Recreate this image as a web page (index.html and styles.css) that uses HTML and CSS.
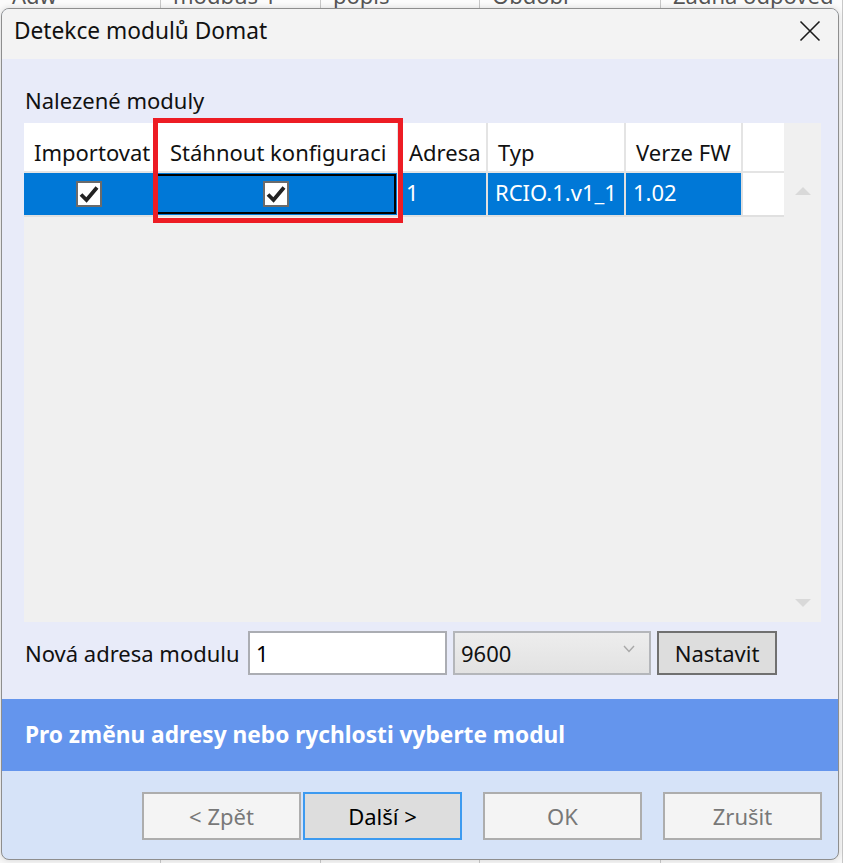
FILE: index.html
```html
<!DOCTYPE html>
<html lang="cs">
<head>
  <meta charset="UTF-8" />
  <title>Detekce modulů Domat</title>
  <link rel="stylesheet" href="styles.css">
</head>

<body>
  <!-- Main app behind the dialog -->
  <div class="app">
    <div class="app-head">
      <div class="app-col"><span>Adw</span></div>
      <div class="app-col"><span>modbus 1</span></div>
      <div class="app-col"><span>popis</span></div>
      <div class="app-col"><span>Obdobi</span></div>
      <div class="app-col"><span>Zadna odpoved</span></div>
    </div>
    <div class="app-body">
      <div class="app-col"></div>
      <div class="app-col"></div>
      <div class="app-col"></div>
      <div class="app-col"></div>
      <div class="app-col"></div>
    </div>
  </div>

  <div class="dialog">
    <div class="title-bar">
      <div class="title">Detekce modulů Domat</div>
      <svg class="close-icon" width="22" height="22" viewBox="0 0 22 22">
        <path d="M1.5 1.5 L20.5 20.5 M20.5 1.5 L1.5 20.5" stroke="#1b1b1b" stroke-width="1.6" fill="none" />
      </svg>
    </div>

    <div class="content">
      <div class="section-label">Nalezené moduly</div>

      <div class="grid-box">
        <div class="grid-table">
          <div class="grid-row header-row">
            <div class="cell">Importovat</div>
            <div class="cell cell-wide">Stáhnout konfiguraci</div>
            <div class="cell">Adresa</div>
            <div class="cell">Typ</div>
            <div class="cell">Verze FW</div>
            <div class="cell"></div>
          </div>
          <div class="grid-row data-row">
            <div class="cell cell-center">
              <span class="checkbox">
                <svg width="22" height="22" viewBox="0 0 22 22"><path d="M3 11.5 L8.5 17 L19 4.5" stroke="#222" stroke-width="3.8" fill="none" /></svg>
              </span>
            </div>
            <div class="cell cell-center cell-focus">
              <span class="checkbox">
                <svg width="22" height="22" viewBox="0 0 22 22"><path d="M3 11.5 L8.5 17 L19 4.5" stroke="#222" stroke-width="3.8" fill="none" /></svg>
              </span>
            </div>
            <div class="cell">1</div>
            <div class="cell">RCIO.1.v1_1</div>
            <div class="cell">1.02</div>
            <div class="cell cell-blank"></div>
          </div>
        </div>

        <div class="scrollbar">
          <svg width="16" height="9" viewBox="0 0 16 9"><path d="M0 9 L8 1 L16 9 Z" fill="#d9d9d9" /></svg>
          <svg width="16" height="9" viewBox="0 0 16 9"><path d="M0 0 L8 8 L16 0 Z" fill="#d9d9d9" /></svg>
        </div>

        <!-- annotation box -->
        <div class="highlight"></div>
      </div>

      <div class="address-row">
        <span class="address-label">Nová adresa modulu</span>
        <div class="text-input">1</div>
        <div class="combo">
          <span>9600</span>
          <svg width="12" height="8" viewBox="0 0 12 8"><path d="M1 1 L6 6.5 L11 1" stroke="#a8a8a8" stroke-width="1.4" fill="none" /></svg>
        </div>
        <button class="set-button">Nastavit</button>
      </div>
    </div>

    <div class="info-banner">Pro změnu adresy nebo rychlosti vyberte modul</div>

    <div class="footer">
      <div class="nav-pair">
        <button class="footer-button">&lt; Zpět</button>
        <button class="footer-button primary">Další &gt;</button>
      </div>
      <button class="footer-button">OK</button>
      <button class="footer-button">Zrušit</button>
    </div>
  </div>
</body>
</html>
```

FILE: styles.css
```css
* {
  margin: 0;
  padding: 0;
  box-sizing: border-box;
  font-family: 'Noto Sans', 'Open Sans', sans-serif;
}

body {
  width: 843px;
  height: 863px;
  overflow: hidden;
  background-color: #f7f7f7;
  position: relative;
}

/* app behind the dialog */
.app {
  height: 100%;
  display: flex;
  flex-direction: column;
}

.app-head,
.app-body {
  display: grid;
  grid-template-columns: 161px 160px 159px 181px 182px;
}

.app-head {
  height: 30px;
  background-color: #fbfbfb;
}

.app-body {
  flex: 1;
}

.app-col {
  border-right: 1px solid #c8c8c8;
  padding-left: 12px;
  overflow: hidden;
}

.app-col span {
  display: block;
  margin-top: -15px;
  font-size: 22px;
  line-height: 20px;
  color: #555;
  white-space: nowrap;
}

/* dialog window */
.dialog {
  position: absolute;
  top: 8px;
  left: 1px;
  width: 838px;
  height: 852px;
  border: 1px solid #8e8e8e;
  border-radius: 8px;
  overflow: hidden;
  display: flex;
  flex-direction: column;
  background-color: #d6e3f8;
  box-shadow: 0 0 6px rgba(0, 0, 0, 0.15);
}

.title-bar {
  height: 50px;
  background-color: #f3f3f3;
  display: flex;
  align-items: flex-start;
  justify-content: space-between;
  padding: 0 17px 0 12px;
  flex-shrink: 0;
}

.title {
  margin-top: 7px;
  font-size: 22.7px;
  line-height: 30px;
  color: #111;
}

.close-icon {
  display: block;
  margin-top: 11px;
}

.content {
  height: 640px;
  background-color: #e8ebf9;
  padding: 27px 17px 0 22px;
  flex-shrink: 0;
}

.section-label {
  font-size: 22px;
  line-height: 28px;
  color: #111;
  margin-bottom: 9px;
  margin-left: 1px;
}

.grid-box {
  position: relative;
  height: 499px;
  background-color: #f0f0f0;
  display: flex;
}

.grid-table {
  width: 760px;
}

.grid-row {
  display: grid;
  grid-template-columns: 129px 242px 87px 136px 115px 41px;
  column-gap: 2px;
  background-color: #e4e4e4;
}

.header-row {
  height: 50px;
  padding-bottom: 2px;
}

.header-row .cell {
  background-color: #fff;
  padding: 15px 0 0 10px;
  color: #111;
}

.header-row .cell-wide {
  padding-left: 15px;
}

.data-row {
  height: 44px;
  padding-bottom: 2px;
  background-color: #e0e0e0;
}

.data-row .cell {
  background-color: #0078d7;
  color: #fff;
  padding: 5px 0 0 7px;
}

.cell {
  font-size: 22px;
  line-height: 28px;
  white-space: nowrap;
  overflow: hidden;
}

.data-row .cell-center {
  padding: 0;
  display: flex;
  align-items: center;
  justify-content: center;
}

.data-row .cell-focus {
  outline: 2px solid #000;
  outline-offset: -3px;
}

.data-row .cell-blank {
  background-color: #fff;
}

.checkbox {
  width: 26px;
  height: 26px;
  background-color: #fff;
  border: 2px solid #6b6b6b;
  display: flex;
  align-items: center;
  justify-content: center;
}

.scrollbar {
  flex: 1;
  display: flex;
  flex-direction: column;
  align-items: center;
  justify-content: space-between;
  padding: 63px 0 14px 0;
}

.highlight {
  position: absolute;
  left: 129px;
  top: -5px;
  width: 250px;
  height: 105px;
  border: 5px solid #ed1c24;
}

/* address row */
.address-row {
  margin-top: 9px;
  height: 44px;
  display: flex;
  align-items: center;
}

.address-label {
  font-size: 22px;
  color: #111;
  margin-left: 1px;
  width: 223px;
  white-space: nowrap;
}

.text-input {
  width: 199px;
  height: 44px;
  background-color: #fff;
  border: 2px solid #abadb3;
  font-size: 22px;
  line-height: 40px;
  padding-left: 6px;
  color: #000;
}

.combo {
  width: 198px;
  height: 44px;
  margin-left: 6px;
  border: 2px solid #b4b6ba;
  background: linear-gradient(#ededed, #e2e2e2);
  display: flex;
  align-items: center;
  justify-content: space-between;
  padding: 0 14px 0 6px;
  font-size: 22px;
  color: #111;
}

.combo svg {
  margin-top: -8px;
}

.set-button {
  width: 120px;
  height: 44px;
  margin-left: 6px;
  background-color: #dddddd;
  border: 2px solid #707070;
  font-size: 22px;
  color: #111;
}

/* blue message strip */
.info-banner {
  height: 72px;
  flex-shrink: 0;
  background-color: #6495ed;
  color: #fff;
  font-weight: bold;
  font-size: 22.7px;
  line-height: 72px;
  padding-left: 23px;
}

.footer {
  flex: 1;
  display: flex;
  justify-content: flex-end;
  align-items: flex-start;
  gap: 21px;
  padding: 21px 16px 0 0;
}

.nav-pair {
  display: flex;
  gap: 2px;
}

.footer-button {
  width: 159px;
  height: 48px;
  background-color: #f4f4f4;
  border: 2px solid #adadad;
  font-size: 22px;
  color: #787878;
}

.footer-button.primary {
  background-color: #dddddd;
  border-color: #3c9af0;
  color: #000;
}
```
